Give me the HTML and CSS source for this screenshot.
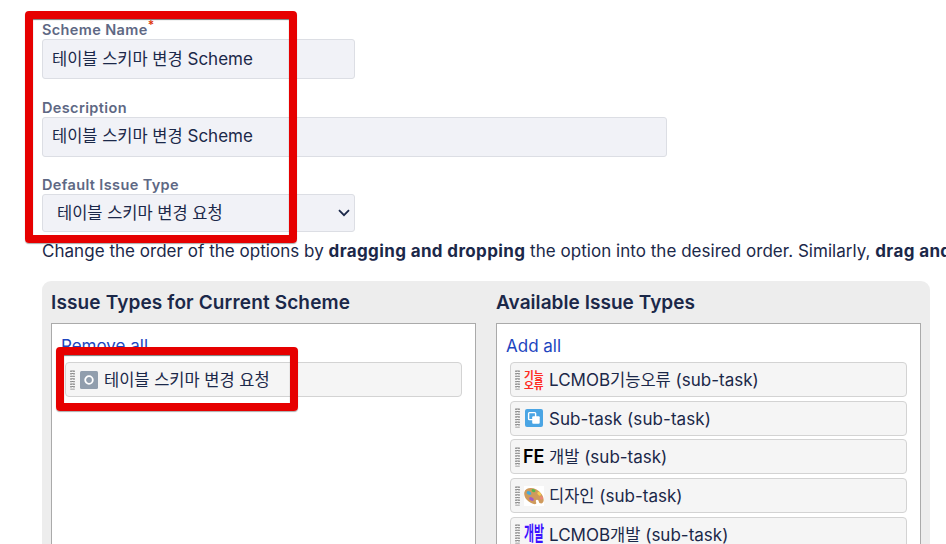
FILE: index.html
```html
<!DOCTYPE html>
<html lang="ko">
<head>
<meta charset="utf-8">
<title>Issue Type Scheme</title>
<link rel="stylesheet" href="styles.css">
</head>
<body>
<svg class="defs" width="0" height="0" aria-hidden="true"><defs>
<symbol id="grip" viewBox="0 0 5 20"><path d="M1 .5v19M4 .5v19" stroke="#666" stroke-width="1.2" stroke-dasharray="1.4 1.2"/><path d="M2.5 .5v19" stroke="#888" stroke-width="1.8" stroke-dasharray="1 1.6"/></symbol>
</defs></svg>
<main class="page">
  <form class="form">
    <div class="field">
      <label class="label">Scheme Name<span class="required">*</span></label>
      <div class="input"><span><span class="ko">테이블 스키마 변경</span> Scheme</span></div>
    </div>
    <div class="field">
      <label class="label">Description</label>
      <div class="input wide"><span><span class="ko">테이블 스키마 변경</span> Scheme</span></div>
    </div>
    <div class="field last">
      <label class="label">Default Issue Type</label>
      <div class="input select"><span class="ko">테이블 스키마 변경 요청</span>
        <svg width="12" height="8" viewBox="0 0 12 8"><path d="M1 1.2 6 6.2 11 1.2" fill="none" stroke="#1b2849" stroke-width="1.8"/></svg>
      </div>
    </div>
  </form>
  <p class="help">Change the order of the options by <b>dragging and dropping</b> the option into the desired order. Similarly, <b>drag and drop</b></p>
  <section class="panel">
    <div class="column">
      <h2 class="title first">Issue Types for Current Scheme</h2>
      <div class="list">
        <a class="bulk remove">Remove all</a>
        <div class="item"><svg class="grip"><use href="#grip"/></svg>
          <svg class="icon" viewBox="0 0 20 20"><rect x="1" y="1" width="18" height="18" rx="1.5" fill="#919ead"/><circle cx="10" cy="10" r="3.8" fill="none" stroke="#fff" stroke-width="1.8"/></svg>
          <span class="name"><span class="ko">테이블 스키마 변경 요청</span></span></div>
      </div>
    </div>
    <div class="column">
      <h2 class="title">Available Issue Types</h2>
      <div class="list">
        <a class="bulk">Add all</a>
        <div class="item"><svg class="grip"><use href="#grip"/></svg>
          <svg class="icon ko-icon" viewBox="0 0 20 20" fill="#ff2b22"><text x="0" y="8.6" font-size="10.4" textLength="19.5" lengthAdjust="spacingAndGlyphs">기능</text><text x="0" y="18.8" font-size="10.4" textLength="19.5" lengthAdjust="spacingAndGlyphs">오류</text></svg>
          <span class="name">LCMOB<span class="ko">기능오류</span> (sub-task)</span></div>
        <div class="item"><svg class="grip"><use href="#grip"/></svg>
          <svg class="icon" viewBox="0 0 20 20"><rect x="1" y="1" width="18" height="18" rx="2" fill="#4aa5e4"/><rect x="4.6" y="4.6" width="7" height="7" rx=".8" fill="none" stroke="#fff" stroke-width="1.4"/><rect x="8.2" y="8.2" width="7.5" height="7.5" rx="1" fill="#fff"/></svg>
          <span class="name latin">Sub-task (sub-task)</span></div>
        <div class="item"><svg class="grip"><use href="#grip"/></svg>
          <svg class="icon fe-icon" viewBox="0 0 20 20"><text x="-1" y="15.6" font-size="18" textLength="21.5" lengthAdjust="spacingAndGlyphs">FE</text></svg>
          <span class="name"><span class="ko">개발</span> (sub-task)</span></div>
        <div class="item"><svg class="grip"><use href="#grip"/></svg>
          <svg class="icon" viewBox="0 0 20 20"><rect width="20" height="20" fill="#fff"/><path d="M.3 6.2C1.4 1.7 7.4.9 12 3.3c4.5 2.3 7.8 6.8 7.7 11-.1 2.8-2.3 3.9-4.1 2.7-1-.7-.5-1.6-1.2-2.5-.8-1-2.4-.9-2.6.3-.2 1.1.9 2 .3 2.9-1.1 1.5-6.9-.8-9.6-4.1C.8 11.4-.2 8.6.3 6.2Z" fill="#cf9a5c"/><ellipse cx="5" cy="7" rx="2.5" ry="1.7" fill="#45abdc" transform="rotate(25 5 7)"/><ellipse cx="9.5" cy="4.6" rx="2" ry="1.4" fill="#54b94e" transform="rotate(20 9.5 4.6)"/><ellipse cx="15.2" cy="7.7" rx="2.2" ry="1.5" fill="#f5cc52" transform="rotate(45 15.2 7.7)"/><ellipse cx="17.5" cy="12" rx="1.5" ry="1.8" fill="#ef8577"/><ellipse cx="7.5" cy="13" rx="2.5" ry="1.6" fill="#a05cc8" transform="rotate(25 7.5 13)"/></svg>
          <span class="name"><span class="ko">디자인</span> (sub-task)</span></div>
        <div class="item"><svg class="grip"><use href="#grip"/></svg>
          <svg class="icon ko-icon" viewBox="0 0 20 20" fill="#3b10ff"><text transform="scale(1 1.8)" x="0" y="9.7" font-size="11.5" textLength="20" lengthAdjust="spacingAndGlyphs">개발</text></svg>
          <span class="name">LCMOB<span class="ko">개발</span> (sub-task)</span></div>
      </div>
    </div>
  </section>
  <div class="mark mark-form"></div>
  <div class="mark mark-item"></div>
</main>
</body>
</html>
```
FILE: styles.css
```css
* { box-sizing: border-box; }
html, body { margin: 0; height: 544px; overflow: hidden; }
body {
  background: #fff;
  color: #1b2849;
  font: 17px/24px Inter, "Noto Sans CJK KR", sans-serif;
}
.defs { position: absolute; }
.page { position: relative; height: 544px; padding: 20px 0 0 42px; overflow: hidden; }
.field { height: 78px; }
.field:nth-child(2) { height: 77px; }
.field:nth-child(2) .input { padding-bottom: 2px; }
.field.last { height: 64px; }
.label { display: block; height: 19px; line-height: 20px; font-size: 14.5px; font-weight: 600; letter-spacing: .37px; color: #5e6884; }
.required { position: relative; top: -6px; left: 0; font-size: 12px; color: #de350b; }
.input {
  display: flex; align-items: center;
  width: 313px; height: 40px; padding: 0 9px;
  border: 1px solid #dcdee4; border-radius: 3px; background: #f1f2f7;
}
.input > span { position: relative; top: -1px; }
.input.wide { width: 625px; }
.input.select { height: 38px; justify-content: space-between; padding: 0 4px 0 14px; }
.ko { font-family: "Noto Sans CJK KR", sans-serif; font-size: 16.5px; }
.help { margin: 0; white-space: nowrap; width: 1100px; letter-spacing: .03px; }
.help b { letter-spacing: .37px; }
.panel {
  display: flex; gap: 20px;
  width: 888px; height: 290px; margin-top: 18px; padding: 0 9px;
  background: #ededed; border-radius: 9px;
}
.column { width: 425px; }
.title { height: 42px; margin: 0; font-size: 19px; line-height: 43px; font-weight: 600; letter-spacing: .05px; }
.title.first { letter-spacing: .14px; }
.list { height: 260px; padding: 9px 13px; border: 1px solid #aaa; background: #fff; }
.bulk { display: block; height: 29px; margin-left: -4px; line-height: 26px; color: #1d45bf; }
.item {
  display: flex; align-items: center;
  width: 397px; height: 35px; margin-bottom: 3.7px; padding-left: 4px;
  border: 1px solid #d3d3d3; border-radius: 4px; background: #f5f5f5;
}
.grip { flex: none; width: 5px; height: 20px; margin-right: 4px; }
.icon { flex: none; width: 20px; height: 20px; margin-right: 5px; overflow: visible; }
.ko-icon { font-family: "Noto Sans CJK KR", sans-serif; font-weight: 700; }
.fe-icon { font-family: Inter, sans-serif; font-weight: 600; fill: #000; }
.name { white-space: nowrap; }
.name.latin { padding-top: 1px; letter-spacing: .07px; }
.mark { position: absolute; border: 8px solid #e60000; border-radius: 4px; box-shadow: 0 1px 1px #0005, inset 0 1px 1px #0008; }
.mark-form { left: 25px; top: 11px; width: 272px; height: 232px; }
.mark-item { left: 56px; top: 347px; width: 242px; height: 64px; }
```
